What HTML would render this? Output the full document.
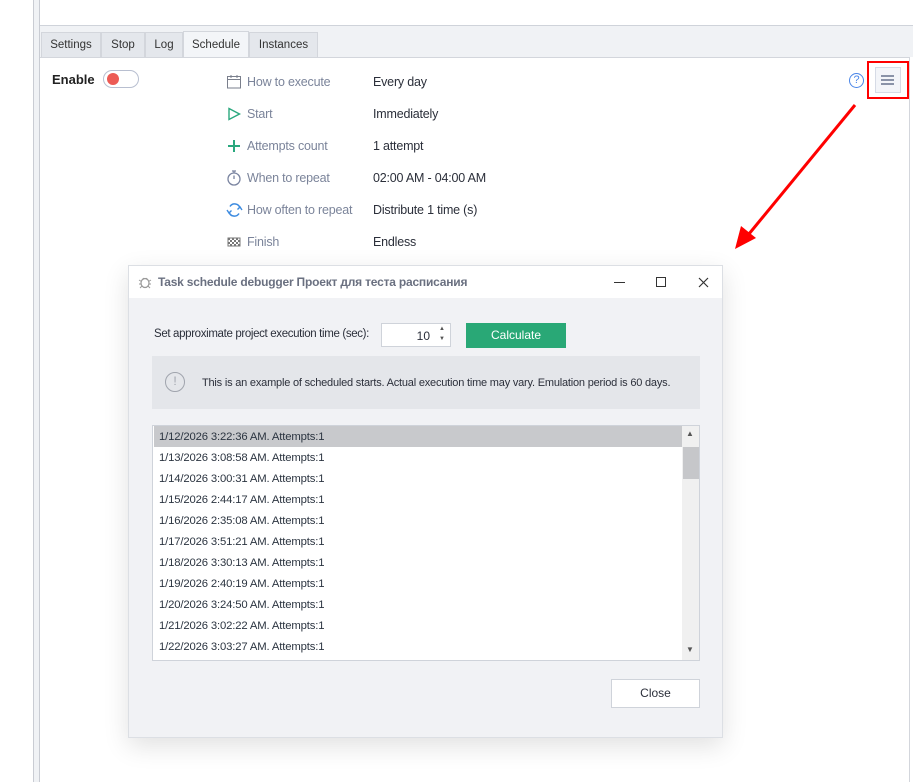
<!DOCTYPE html>
<html><head><meta charset="utf-8"><style>
*{box-sizing:border-box;margin:0;padding:0}
body{width:913px;height:782px;overflow:hidden;background:#fff;font-family:"Liberation Sans","Noto Sans CJK SC",sans-serif;font-size:12px;color:#2b2f3a;position:relative}
.abs{position:absolute}
.tab{position:absolute;top:32px;height:25px;background:#e4e7ec;border:1px solid #d3d6dc;border-bottom:none;font-size:11.5px;color:#333;text-align:center;line-height:24px}
.lbl{position:absolute;left:247px;color:#7b849a;font-size:12.5px;letter-spacing:-0.2px}
.val{position:absolute;left:373px;color:#2b2f3a;font-size:12.5px;letter-spacing:-0.2px}
.ico{position:absolute;left:226px}
.row{position:absolute;left:1px;width:529px;height:21px;line-height:23px;padding-left:5px;font-size:11.3px;color:#2b3440;letter-spacing:-0.15px}
</style></head><body>
<div class="abs" style="left:33px;top:0;width:7px;height:782px;background:#f0f2f5;border-left:1px solid #c9ccd3;border-right:1px solid #c9ccd3"></div>
<div class="abs" style="left:40px;top:0;width:873px;height:57px;background:#f0f2f5"></div>
<div class="abs" style="left:40px;top:0;width:873px;height:26px;background:#fff;border-bottom:1px solid #cfd3da"></div>
<div class="tab" style="left:41px;width:60px">Settings</div>
<div class="tab" style="left:101px;width:44px">Stop</div>
<div class="tab" style="left:145px;width:38px">Log</div>
<div class="tab" style="left:183px;width:66px;background:#f3f5f8;top:31px;height:27px;line-height:27px">Schedule</div>
<div class="tab" style="left:249px;width:69px">Instances</div>
<div class="abs" style="left:40px;top:57px;width:870px;height:725px;background:#fff;border-top:1px solid #d3d6dc;border-right:1px solid #d3d6dc"></div>

<div class="abs" style="left:52px;top:72px;font-weight:bold;font-size:13px;color:#222">Enable</div>
<div class="abs" style="left:103px;top:70px;width:36px;height:18px;border:1px solid #b8bfd0;border-radius:9px;background:#fff"><div style="position:absolute;left:3px;top:2px;width:12px;height:12px;border-radius:50%;background:#ec5b55"></div></div>

<svg class="ico" style="top:74px" width="16" height="16"><rect x="1.5" y="2.5" width="13" height="11.5" fill="none" stroke="#7a7f8c"/><line x1="1.5" y1="5.5" x2="14.5" y2="5.5" stroke="#7a7f8c"/><line x1="5" y1="1" x2="5" y2="4" stroke="#7a7f8c"/><line x1="11" y1="1" x2="11" y2="4" stroke="#7a7f8c"/></svg>
<div class="lbl" style="top:75px">How to execute</div><div class="val" style="top:75px">Every day</div>
<svg class="ico" style="top:106px" width="16" height="16"><path d="M3 2.5 L13.5 8 L3 13.5 Z" fill="none" stroke="#2aa87e" stroke-width="1.4"/></svg>
<div class="lbl" style="top:107px">Start</div><div class="val" style="top:107px">Immediately</div>
<svg class="ico" style="top:138px" width="16" height="16"><path d="M8 2v12M2 8h12" stroke="#2aa87e" stroke-width="2"/></svg>
<div class="lbl" style="top:139px">Attempts count</div><div class="val" style="top:139px">1 attempt</div>
<svg class="ico" style="top:169px" width="16" height="18"><circle cx="8" cy="10" r="6" fill="none" stroke="#7a84a0" stroke-width="1.3"/><path d="M6 2h4M8 2v2M8 10V6.5" stroke="#7a84a0" stroke-width="1.3"/></svg>
<div class="lbl" style="top:171px">When to repeat</div><div class="val" style="top:171px">02:00 AM - 04:00 AM</div>
<svg class="ico" style="top:202px" width="17" height="16"><path d="M3 10a5.5 5.5 0 0 0 10 1.5M14 6a5.5 5.5 0 0 0-10-1.5" fill="none" stroke="#3d8be0" stroke-width="1.5"/><path d="M1 8l2 3 2.5-2.5M16 8l-2-3-2.5 2.5" fill="none" stroke="#3d8be0" stroke-width="1.4"/></svg>
<div class="lbl" style="top:203px">How often to repeat</div><div class="val" style="top:203px">Distribute 1 time (s)</div>
<svg class="ico" style="top:235px" width="16" height="14"><rect x="2" y="3" width="12" height="8" fill="#fff" stroke="#777"/><path d="M2 3h2v2H2zM6 3h2v2H6zM10 3h2v2h-2zM4 5h2v2H4zM8 5h2v2H8zM12 5h2v2h-2zM2 7h2v2H2zM6 7h2v2H6zM10 7h2v2h-2zM4 9h2v2H4zM8 9h2v2H8zM12 9h2v2h-2z" fill="#777"/></svg>
<div class="lbl" style="top:235px">Finish</div><div class="val" style="top:235px">Endless</div>

<div class="abs" style="left:849px;top:73px;width:15px;height:15px;border:1.3px solid #4a86e8;border-radius:50%;color:#4a86e8;font-size:11px;text-align:center;line-height:13px">?</div>
<div class="abs" style="left:867px;top:61px;width:42px;height:38px;border:2px solid #f00"></div>
<div class="abs" style="left:875px;top:67px;width:26px;height:26px;background:#f3f5f9;border:1px solid #d6dbe6"></div>
<svg class="abs" style="left:880px;top:73px" width="16" height="14"><path d="M1 3h13M1 7h13M1 11h13" stroke="#8a93a8" stroke-width="2"/></svg>
<svg class="abs" style="left:730px;top:100px" width="130" height="152"><line x1="125" y1="5" x2="14" y2="140" stroke="#f00" stroke-width="3"/><path d="M5 149 L11 126 L26 138 Z" fill="#f00"/></svg>

<div class="abs" style="left:128px;top:265px;width:595px;height:473px;background:#f1f2f5;border:1px solid #dcdfe4;box-shadow:0 8px 24px rgba(0,0,0,0.12)">
 <div style="position:absolute;left:0;top:0;width:593px;height:32px;background:#fff"></div>
 <svg style="position:absolute;left:9px;top:9px" width="14" height="14"><ellipse cx="7" cy="8" rx="4" ry="4.5" fill="none" stroke="#999" stroke-width="1.2"/><path d="M1 5l2.5 1.5M13 5l-2.5 1.5M1 9h2.5M13 9h-2.5M2 13l2-2M12 13l-2-2M5 3l1 1.5M9 3l-1 1.5" stroke="#999"/></svg>
 <div style="position:absolute;left:29px;top:9px;font-weight:bold;font-size:12px;color:#6a7080;letter-spacing:-0.2px">Task schedule debugger Проект для теста расписания</div>
 <div style="position:absolute;left:485px;top:16px;width:11px;height:1px;background:#333"></div>
 <div style="position:absolute;left:527px;top:11px;width:10px;height:10px;border:1px solid #333"></div>
 <svg style="position:absolute;left:569px;top:11px" width="11" height="11"><path d="M1 1l9 9M10 1l-9 9" stroke="#333" stroke-width="1.2"/></svg>
 <div style="position:absolute;left:25px;top:62px;font-size:11.5px;letter-spacing:-0.35px;color:#2b2f3a;white-space:nowrap">Set approximate project execution time (sec):</div>
 <div style="position:absolute;left:252px;top:57px;width:70px;height:24px;background:#fff;border:1px solid #cfd3da"><span style="position:absolute;right:20px;top:5px;font-size:12px">10</span><span style="position:absolute;right:5px;top:2px;font-size:6px;color:#555">▲</span><span style="position:absolute;right:5px;top:12px;font-size:6px;color:#555">▼</span></div>
 <div style="position:absolute;left:337px;top:57px;width:100px;height:25px;background:#29a876;color:#fff;text-align:center;line-height:25px;font-size:12px">Calculate</div>
 <div style="position:absolute;left:23px;top:90px;width:548px;height:53px;background:#e4e6ea"></div>
 <div style="position:absolute;left:36px;top:106px;width:20px;height:20px;border:1.5px solid #a0a4ad;border-radius:50%;color:#a0a4ad;text-align:center;line-height:17px;font-size:12px">!</div>
 <div style="position:absolute;left:73px;top:111px;font-size:11px;letter-spacing:-0.2px;color:#2b2f3a;white-space:nowrap">This is an example of scheduled starts. Actual execution time may vary. Emulation period is 60 days.</div>
 <div style="position:absolute;left:23px;top:159px;width:548px;height:236px;background:#fff;border:1px solid #cfd3da;overflow:hidden">
  <div class="row" style="top:0;background:#c8c9cc">1/12/2026 3:22:36 AM. Attempts:1</div>
  <div class="row" style="top:21px">1/13/2026 3:08:58 AM. Attempts:1</div>
  <div class="row" style="top:42px">1/14/2026 3:00:31 AM. Attempts:1</div>
  <div class="row" style="top:63px">1/15/2026 2:44:17 AM. Attempts:1</div>
  <div class="row" style="top:84px">1/16/2026 2:35:08 AM. Attempts:1</div>
  <div class="row" style="top:105px">1/17/2026 3:51:21 AM. Attempts:1</div>
  <div class="row" style="top:126px">1/18/2026 3:30:13 AM. Attempts:1</div>
  <div class="row" style="top:147px">1/19/2026 2:40:19 AM. Attempts:1</div>
  <div class="row" style="top:168px">1/20/2026 3:24:50 AM. Attempts:1</div>
  <div class="row" style="top:189px">1/21/2026 3:02:22 AM. Attempts:1</div>
  <div class="row" style="top:210px">1/22/2026 3:03:27 AM. Attempts:1</div>
  <div style="position:absolute;left:529px;top:0;width:18px;height:234px;background:#f0f0f0"></div>
  <div style="position:absolute;left:530px;top:21px;width:16px;height:32px;background:#c6c7ca"></div>
  <div style="position:absolute;left:533px;top:3px;font-size:8px;color:#555">▲</div>
  <div style="position:absolute;left:533px;top:219px;font-size:8px;color:#555">▼</div>
 </div>
 <div style="position:absolute;left:482px;top:413px;width:89px;height:29px;background:#fff;border:1px solid #cfd3da;text-align:center;line-height:27px;font-size:12px">Close</div>
</div>
</body></html>
